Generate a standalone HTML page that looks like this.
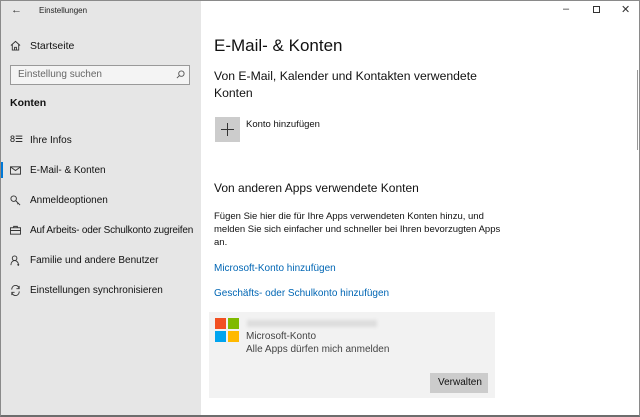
<!DOCTYPE html>
<html><head><meta charset="utf-8"><style>
*{margin:0;padding:0;box-sizing:border-box}
body{width:640px;height:417px;overflow:hidden;font-family:"Liberation Sans",sans-serif;background:#fff;position:relative;color:#000}
.side{position:absolute;left:0;top:0;width:201px;height:417px;background:#e6e6e6}
.t{position:absolute;white-space:nowrap}
.frame{position:absolute;left:0;top:0;width:640px;height:417px;border:1px solid #8a8a8a;border-bottom:2px solid #6d6d6d;pointer-events:none}
.nav{font-size:10px;color:#111}
.ic{position:absolute;left:10px;width:11px;height:11px}
.link{color:#0066b4;font-size:10px}
</style></head><body>
<div class="side"></div>
<div class="t" style="left:11px;top:4px;font-size:11px;color:#333">←</div>
<div class="t" style="left:39px;top:6px;font-size:8px;color:#222">Einstellungen</div>
<svg class="ic" style="top:40px" viewBox="0 0 12 12"><path d="M1 6L6 1.5 11 6M2.5 5v6h7V5M5 11V8h2v3" fill="none" stroke="#333" stroke-width="1"/></svg>
<div class="t nav" style="left:30px;top:40px;font-size:10.5px">Startseite</div>
<div style="position:absolute;left:10px;top:65px;width:180px;height:20px;border:1px solid #999;background:#f4f4f4"></div>
<div class="t" style="left:18px;top:69px;font-size:10px;color:#666">Einstellung suchen</div>
<svg style="position:absolute;left:176px;top:70px;width:9px;height:9px" viewBox="0 0 10 10"><circle cx="6" cy="4" r="3" fill="none" stroke="#555"/><path d="M4 6L1 9" stroke="#555"/></svg>
<div class="t" style="left:10px;top:97px;font-size:10.5px;font-weight:bold;color:#111">Konten</div>
<div class="t nav" style="left:10px;top:134px;font-size:9px">8☰</div>
<div class="t nav" style="left:30px;top:135px">Ihre Infos</div>
<div style="position:absolute;left:0;top:162px;width:3px;height:16px;background:#0078d7"></div>
<svg class="ic" style="top:165px" viewBox="0 0 12 12"><rect x="0.5" y="2" width="11" height="8" fill="none" stroke="#333"/><path d="M0.5 2l5.5 4 5.5-4" fill="none" stroke="#333"/></svg>
<div class="t nav" style="left:30px;top:165px">E-Mail- &amp; Konten</div>
<svg class="ic" style="top:195px" viewBox="0 0 12 12"><circle cx="4" cy="4" r="3" fill="none" stroke="#333"/><path d="M6 6l5 5M9 9l-1 1" stroke="#333" fill="none"/></svg>
<div class="t nav" style="left:30px;top:195px">Anmeldeoptionen</div>
<svg class="ic" style="top:225px" viewBox="0 0 12 12"><rect x="0.5" y="3" width="11" height="7" fill="none" stroke="#333"/><path d="M4 3V1.5h4V3M0.5 6h11" fill="none" stroke="#333"/></svg>
<div class="t nav" style="left:30px;top:225px;letter-spacing:-0.2px">Auf Arbeits- oder Schulkonto zugreifen</div>
<svg class="ic" style="top:255px" viewBox="0 0 12 12"><circle cx="5" cy="3.5" r="2.5" fill="none" stroke="#333"/><path d="M1 11c0-3 2-5 4-5s3 1 4 3M9 9v3M8 10.5h2" fill="none" stroke="#333"/></svg>
<div class="t nav" style="left:30px;top:255px">Familie und andere Benutzer</div>
<svg class="ic" style="top:285px" viewBox="0 0 12 12"><path d="M2 5a4 4 0 0 1 8-1M10 7a4 4 0 0 1-8 1M10 1v3H7M2 11V8h3" fill="none" stroke="#333"/></svg>
<div class="t nav" style="left:30px;top:285px">Einstellungen synchronisieren</div>

<div class="t" style="left:563px;top:3px;font-size:11px;color:#333">–</div>
<div style="position:absolute;left:593px;top:6px;width:7px;height:7px;border:1px solid #333"></div>
<div class="t" style="left:621px;top:3px;font-size:11px;color:#333">✕</div>
<div style="position:absolute;left:637px;top:70px;width:1px;height:80px;background:#999"></div>

<div class="t" style="left:214px;top:36px;font-size:17px;color:#111">E-Mail- &amp; Konten</div>
<div class="t" style="left:214px;top:68px;font-size:12.2px;color:#111;line-height:17px">Von E-Mail, Kalender und Kontakten verwendete<br>Konten</div>
<div style="position:absolute;left:215px;top:117px;width:25px;height:25px;background:#ccc"></div>
<svg style="position:absolute;left:221px;top:123px;width:13px;height:13px" viewBox="0 0 13 13"><path d="M6.5 0v13M0 6.5h13" stroke="#333" stroke-width="1"/></svg>
<div class="t" style="left:246px;top:119px;font-size:9.5px;color:#111">Konto hinzufügen</div>
<div class="t" style="left:214px;top:181px;font-size:12px;color:#111">Von anderen Apps verwendete Konten</div>
<div class="t" style="left:214px;top:210px;font-size:9.5px;color:#111;line-height:13px">Fügen Sie hier die für Ihre Apps verwendeten Konten hinzu, und<br>melden Sie sich einfacher und schneller bei Ihren bevorzugten Apps<br>an.</div>
<div class="t link" style="left:214px;top:263px">Microsoft-Konto hinzufügen</div>
<div class="t link" style="left:214px;top:288px">Geschäfts- oder Schulkonto hinzufügen</div>

<div style="position:absolute;left:209px;top:312px;width:286px;height:86px;background:#f2f2f2"></div>
<div style="position:absolute;left:215px;top:318px;width:11px;height:11px;background:#f25022"></div>
<div style="position:absolute;left:228px;top:318px;width:11px;height:11px;background:#7fba00"></div>
<div style="position:absolute;left:215px;top:331px;width:11px;height:11px;background:#00a4ef"></div>
<div style="position:absolute;left:228px;top:331px;width:11px;height:11px;background:#ffb900"></div>
<div style="position:absolute;left:247px;top:320px;width:130px;height:7px;background:#ddd;filter:blur(1.5px)"></div>
<div class="t" style="left:246px;top:331px;font-size:10px;color:#444">Microsoft-Konto</div>
<div class="t" style="left:246px;top:344px;font-size:10px;color:#444">Alle Apps dürfen mich anmelden</div>
<div style="position:absolute;left:430px;top:373px;width:58px;height:20px;background:#ccc"></div>
<div class="t" style="left:438px;top:377px;font-size:10px;color:#111">Verwalten</div>
<div class="frame"></div>
</body></html>
